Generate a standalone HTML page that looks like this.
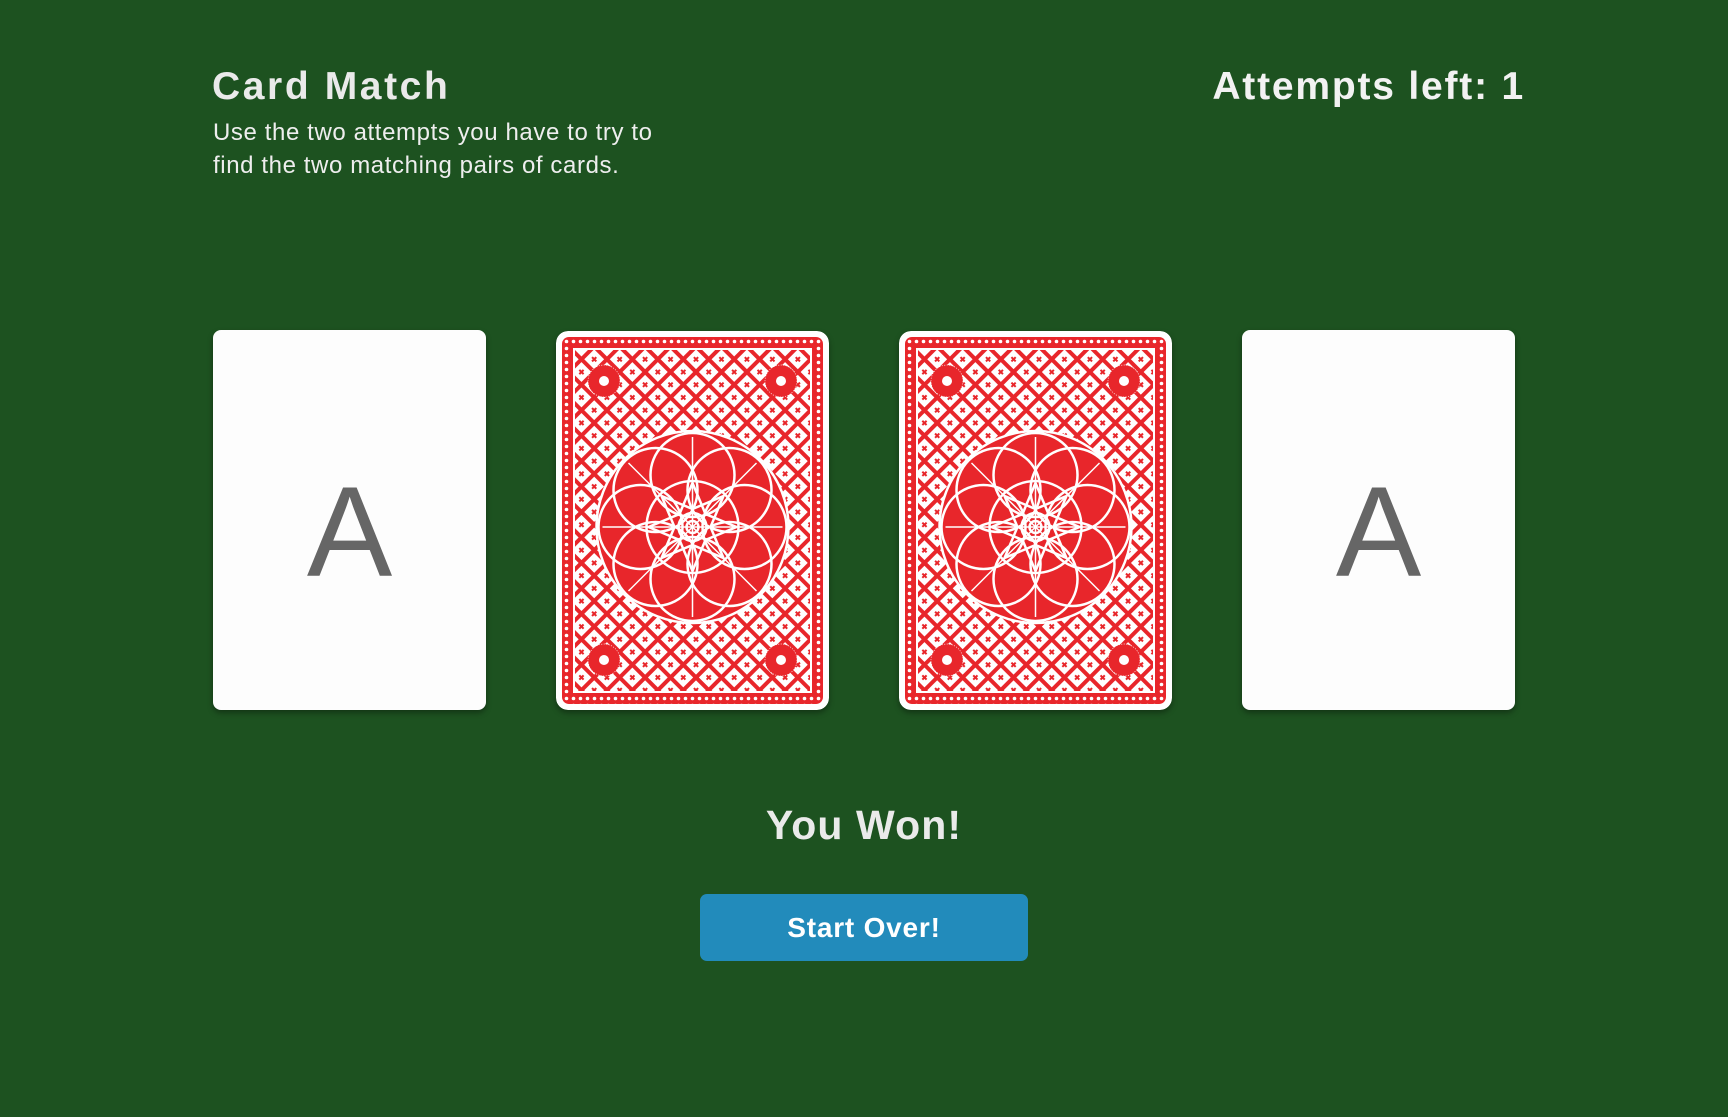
<!DOCTYPE html>
<html><head><meta charset="utf-8">
<style>
html,body{margin:0;padding:0;}
body{width:1728px;height:1117px;background:#1d5220;position:relative;overflow:hidden;font-family:"Liberation Sans",sans-serif;color:#eaeaea;}
.t{position:absolute;left:212px;top:62px;font-size:39px;font-weight:bold;margin:0;line-height:50px;letter-spacing:2.6px;}
.s{position:absolute;left:213px;top:116px;font-size:24px;line-height:33px;color:#eee;letter-spacing:0.6px;}
.a{position:absolute;right:203px;top:62px;font-size:39px;font-weight:bold;line-height:50px;color:#f2f2f2;letter-spacing:1.8px;}
.card{position:absolute;top:330px;width:273px;height:380px;background:#fdfdfd;border-radius:8px;box-shadow:0 3px 6px rgba(0,0,0,.35);}
.L{position:absolute;width:273px;text-align:center;top:458px;font-size:128px;color:#666;line-height:150px;}
.back{position:absolute;top:331px;width:273px;height:379px;border-radius:12px;box-shadow:0 3px 6px rgba(0,0,0,.35);}
.won{position:absolute;left:0;width:1728px;text-align:center;top:797px;font-size:41px;font-weight:bold;line-height:56px;letter-spacing:1.1px;}
.btn{position:absolute;left:700px;top:894px;width:328px;height:67px;background:#228bbb;border-radius:7px;color:#fff;font-weight:bold;font-size:28px;text-align:center;line-height:67px;letter-spacing:0.8px;}
</style></head><body>
<h1 class="t">Card Match</h1>
<div class="s">Use the two attempts you have to try to<br>find the two matching pairs of cards.</div>
<div class="a">Attempts left: 1</div>

<div class="card" style="left:213px"></div>
<div class="L" style="left:213px">A</div>

<svg class="back" style="left:556px" viewBox="0 0 273 379" width="273" height="379">
<defs>
<pattern id="lat" width="18" height="18" patternUnits="userSpaceOnUse" patternTransform="rotate(45)">
<rect width="18" height="18" fill="#fff"/>
<rect x="0" y="0" width="18" height="4" fill="#e8262b"/>
<rect x="0" y="0" width="4" height="18" fill="#e8262b"/>
<rect x="10" y="8" width="2" height="6" fill="#e8262b"/>
<rect x="8" y="10" width="6" height="2" fill="#e8262b"/>
</pattern>
<pattern id="dots" width="7" height="7" patternUnits="userSpaceOnUse">
<rect width="7" height="7" fill="#e8262b"/><circle cx="3.5" cy="3.5" r="1.8" fill="#fff"/>
</pattern>
<g id="rose">
<circle r="16" fill="#e8262b"/><circle r="16" fill="none" stroke="#fff" stroke-width="0.7" stroke-dasharray="1 1.5"/>
<circle r="5" fill="#fff"/>
</g>
<g id="med">
<circle r="96" fill="#e8262b"/>
<g fill="none" stroke="#fff" stroke-width="2.5">
<circle r="96"/>
<circle cx="0" cy="-52" r="42"/><circle cx="37" cy="-37" r="42"/><circle cx="52" cy="0" r="42"/><circle cx="37" cy="37" r="42"/>
<circle cx="0" cy="52" r="42"/><circle cx="-37" cy="37" r="42"/><circle cx="-52" cy="0" r="42"/><circle cx="-37" cy="-37" r="42"/>
<circle r="46"/>
<polygon points="0,-44 13,-13 44,0 13,13 0,44 -13,13 -44,0 -13,-13"/>
<polygon points="31,-31 0,-18 -31,-31 -18,0 -31,31 0,18 31,31 18,0"/>
<circle r="14"/><circle r="6"/>
</g>
<g stroke="#fff" stroke-width="1.5">
<line x1="-90" y1="0" x2="90" y2="0"/><line x1="0" y1="-90" x2="0" y2="90"/>
<line x1="-64" y1="-64" x2="64" y2="64"/><line x1="-64" y1="64" x2="64" y2="-64"/>
</g>
</g>
<g id="cb">
<rect width="273" height="379" rx="12" fill="#fff"/>
<rect x="6" y="6" width="261" height="367" rx="7" fill="url(#dots)"/>
<rect x="14" y="14" width="245" height="351" fill="#e8262b"/>
<rect x="17" y="17" width="239" height="345" fill="#fff"/>
<rect x="19" y="19" width="235" height="341" fill="url(#lat)"/>
<use href="#med" x="136.5" y="196"/>
<use href="#rose" x="48" y="50"/><use href="#rose" x="225" y="50"/>
<use href="#rose" x="48" y="329"/><use href="#rose" x="225" y="329"/>
</g>
</defs>
<use href="#cb"/>
</svg>

<svg class="back" style="left:899px" viewBox="0 0 273 379" width="273" height="379">
<use href="#cb"/>
</svg>

<div class="card" style="left:1242px"></div>
<div class="L" style="left:1242px">A</div>

<div class="won">You Won!</div>
<div class="btn">Start Over!</div>
</body></html>
